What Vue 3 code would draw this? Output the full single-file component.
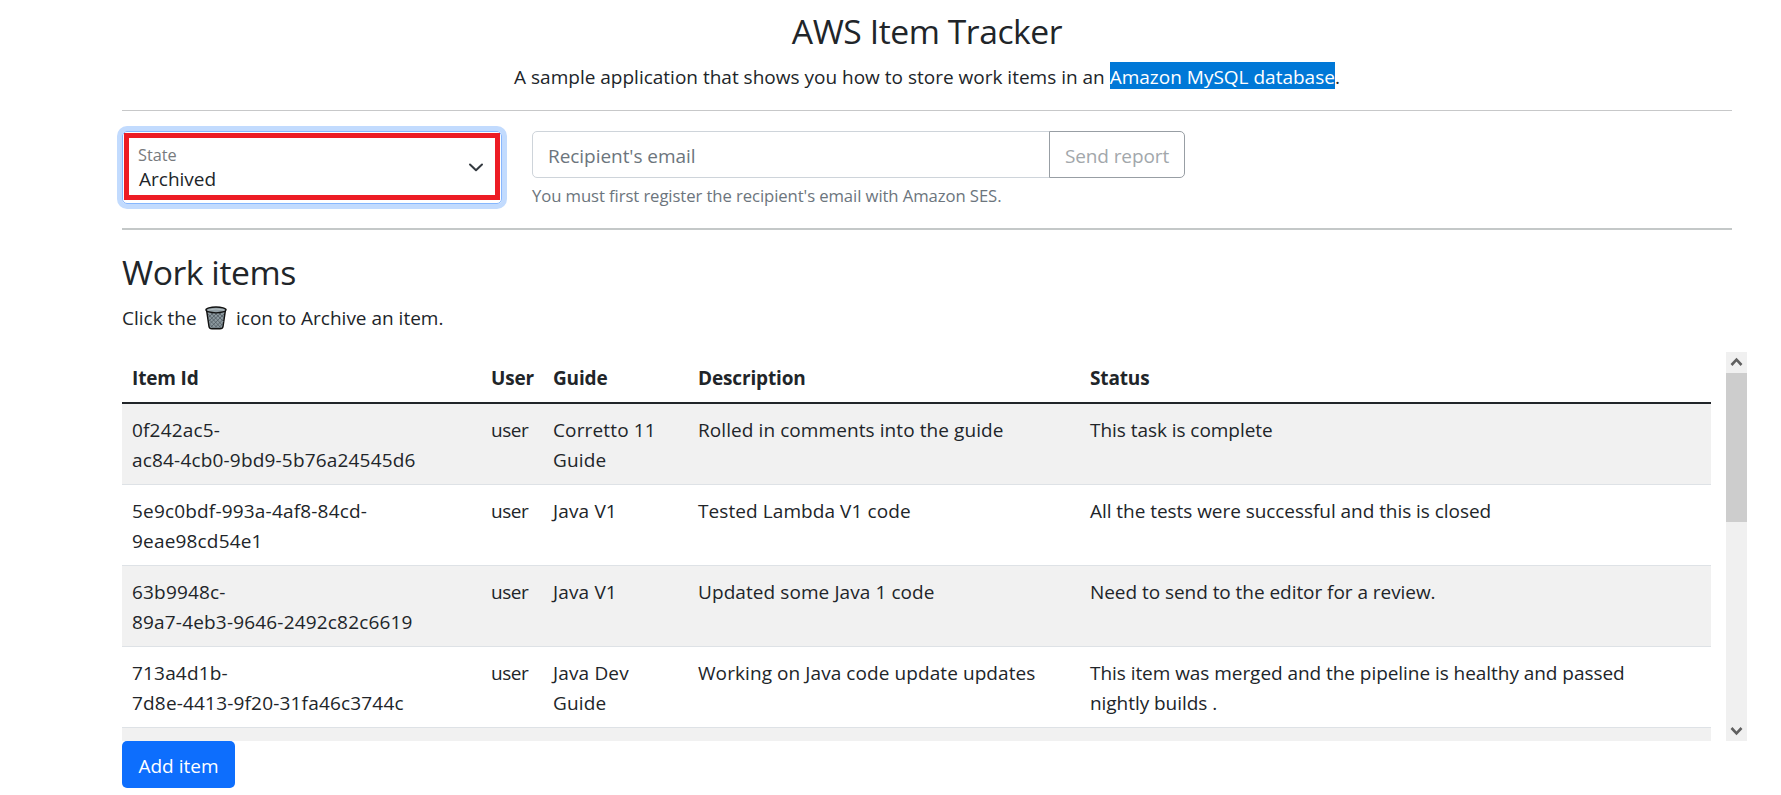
<script setup>
import { ref } from 'vue'

const email = ref('')
const columns = ['Item Id', 'User', 'Guide', 'Description', 'Status']
const items = [
  { id: ['0f242ac5-', 'ac84-4cb0-9bd9-5b76a24545d6'], user: 'user', guide: ['Corretto 11', 'Guide'], description: 'Rolled in comments into the guide', status: ['This task is complete'] },
  { id: ['5e9c0bdf-993a-4af8-84cd-', '9eae98cd54e1'], user: 'user', guide: ['Java V1'], description: 'Tested Lambda V1 code', status: ['All the tests were successful and this is closed'] },
  { id: ['63b9948c-', '89a7-4eb3-9646-2492c82c6619'], user: 'user', guide: ['Java V1'], description: 'Updated some Java 1 code', status: ['Need to send to the editor for a review.'] },
  { id: ['713a4d1b-', '7d8e-4413-9f20-31fa46c3744c'], user: 'user', guide: ['Java Dev', 'Guide'], description: 'Working on Java code update updates', status: ['This item was merged and the pipeline is healthy and passed', 'nightly builds .'] },
]
</script>

<template>
  <main class="page">
    <header class="intro">
      <h1>AWS Item Tracker</h1>
      <p>A sample application that shows you how to store work items in an <span class="selected">Amazon MySQL database</span>.</p>
    </header>

    <section class="controls">
      <div class="state">
        <div class="marker">
          <div class="state-text">
            <span class="state-label">State</span>
            <span class="state-value">Archived</span>
          </div>
          <svg class="chevron" viewBox="0 0 16 16" width="16" height="16"><path d="M2 5.500l6 5.700 6-5.700" fill="none" stroke="#343a40" stroke-width="2" stroke-linecap="round" stroke-linejoin="round" /></svg>
        </div>
      </div>
      <div class="report">
        <div class="input-group">
          <input v-model="email" type="text" placeholder="Recipient's email">
          <button type="button" class="send" disabled>Send report</button>
        </div>
        <div class="help">You must first register the recipient's email with Amazon SES.</div>
      </div>
    </section>

    <section class="work">
      <h2>Work items</h2>
      <p class="hint">
        <span class="hint-start">Click the</span>
        <svg class="trash" viewBox="0 0 22 24" width="22" height="24">
          <path d="M1.500 3.500L4 20.500Q4.300 22.800 7 22.800H15Q17.700 22.800 18 20.500L20.500 3.500Z" fill="#8b989e" stroke="#111" stroke-width="1.500" />
          <path d="M3 8l13 14M6 7l12 13M10 7l9 9M14 7l5 5M3.500 13l9 9M4.500 18l4 4M19 8L6 21M16 7L4.500 18M12 7l-8 8M8 7l-5 5M18.500 13l-9 9M17.500 18l-4 4" fill="none" stroke="#4b555b" stroke-width=".7" />
          <ellipse cx="11" cy="3.900" rx="10" ry="2.900" fill="#93a0a6" stroke="#111" stroke-width="1.300" />
          <path d="M3 4Q11 2 19 4" fill="none" stroke="#b4bec2" stroke-width="1" />
        </svg>
        <span class="hint-end">icon to Archive an item.</span>
      </p>

      <div class="viewport">
        <div class="table-clip">
          <table>
            <colgroup><col class="c-id"><col class="c-user"><col class="c-guide"><col class="c-desc"><col></colgroup>
            <thead>
              <tr><th v-for="c in columns" :key="c">{{ c }}</th></tr>
            </thead>
            <tbody>
              <tr v-for="item in items" :key="item.id[1]">
                <td class="id"><div v-for="line in item.id" :key="line">{{ line }}</div></td>
                <td class="user">{{ item.user }}</td>
                <td class="guide"><div v-for="line in item.guide" :key="line">{{ line }}</div></td>
                <td class="description">{{ item.description }}</td>
                <td class="status"><div v-for="line in item.status" :key="line">{{ line }}</div></td>
              </tr>
              <tr><td colspan="5"></td></tr>
            </tbody>
          </table>
        </div>
        <div class="scrollbar">
          <svg viewBox="0 0 21 21" width="21" height="21"><path d="M5.500 13l5-5.300 5 5.300" fill="none" stroke="#606060" stroke-width="2.600" /></svg>
          <div class="thumb"></div>
          <svg class="down" viewBox="0 0 21 21" width="21" height="21"><path d="M5.500 8l5 5.300 5-5.300" fill="none" stroke="#606060" stroke-width="2.600" /></svg>
        </div>
      </div>
      <button type="button" class="add">Add item</button>
    </section>
  </main>
</template>

<style>
body { background: #fff; overflow: hidden; }
</style>

<style scoped>
* { box-sizing: border-box; }
.page {
  width: 1781px;
  height: 795px;
  padding: 0 34px 0 122px;
  overflow: hidden;
  background: #fff;
  color: #212529;
  font: 19px/30px "Open Sans", "Noto Sans", sans-serif;
  white-space: nowrap;
}
h1, h2, p { margin: 0; }
h1, h2 { font-size: 33.7px; font-weight: 400; line-height: 42px; letter-spacing: -.45px; }
.intro {
  width: 1610px;
  height: 111px;
  padding-top: 10px;
  border-bottom: 1px solid #c7c8c9;
  text-align: center;
}
.intro p { margin-top: 10px; }
.selected {
  background: linear-gradient(#0078d7, #0078d7) 0 0 / 100% 25px no-repeat;
  box-shadow: 0 -2px #0078d7;
  color: #fff;
}
.controls {
  display: flex;
  gap: 30px;
  width: 1610px;
  height: 119px;
  padding-top: 20px;
  border-bottom: 2px solid #c4c8c8;
}
.state {
  width: 380px;
  height: 73px;
  padding: 1px;
  border: 1px solid #86b7fe;
  border-radius: 5px;
  box-shadow: 0 0 0 5px #c2dbfe;
}
.marker {
  display: flex;
  align-items: center;
  justify-content: space-between;
  width: 376px;
  height: 67px;
  padding: 0 11px 0 10px;
  border: 5px solid #ed1c24;
}
.state-text { display: flex; flex-direction: column; }
.state-label { margin-left: -1px; font-size: 16.300px; line-height: 24px; color: #777a7d; }
.state-value { line-height: 24px; }
.chevron { display: block; }
.input-group { display: flex; width: 653px; height: 47px; }
input {
  width: 518px;
  padding: 2px 15px 0;
  border: 1px solid #ced4da;
  border-radius: 5px 0 0 5px;
  background: #fff;
  font: inherit;
  letter-spacing: -.05px;
  outline: 0;
}
input::placeholder { color: #6c757d; opacity: 1; }
.send {
  width: 136px;
  margin-left: -1px;
  padding: 2px 0 0;
  border: 1px solid #989ea4;
  border-radius: 0 5px 5px 0;
  background: #fff;
  color: #a2a7ab;
  font: inherit;
  letter-spacing: -.1px;
}
.help { margin-top: 5px; font-size: 16.700px; line-height: 26px; letter-spacing: -.09px; color: #6c757d; }
.work { padding-top: 21px; }
.hint { display: flex; height: 30px; margin-top: 10px; }
.hint-start { width: 83px; }
.trash { display: block; margin-top: 3px; }
.hint-end { margin-left: 9px; }
.viewport { display: flex; justify-content: space-between; width: 1625px; height: 389px; margin-top: 19px; }
.table-clip { width: 1589px; height: 389px; overflow: hidden; }
table { width: 100%; table-layout: fixed; border-collapse: separate; border-spacing: 0; }
.c-id { width: 359px; }
.c-user { width: 62px; }
.c-guide { width: 145px; }
.c-desc { width: 392px; }
th { height: 52px; padding: 11px 10px 9px; border-bottom: 2px solid #212529; font-weight: 700; letter-spacing: -.15px; text-align: left; }
td { height: 81px; padding: 11px 10px 9px; border-bottom: 1px solid #dee2e6; vertical-align: top; }
.id { letter-spacing: .18px; }
.user { letter-spacing: -.5px; }
.guide { letter-spacing: .15px; }
.description { letter-spacing: .08px; }
.status { letter-spacing: -.05px; }
tbody tr:nth-child(odd) td { background: #f1f1f1; }
.scrollbar { display: flex; flex-direction: column; width: 21px; background: #f0f0f0; }
.scrollbar svg { display: block; }
.thumb { height: 149px; background: #cdcdcd; }
.down { margin-top: auto; }
.add {
  display: block;
  width: 113px;
  height: 47px;
  padding: 2px 0 0;
  border: 0;
  border-radius: 5px;
  background: #0d6efd;
  color: #fff;
  font: inherit;
}
</style>
